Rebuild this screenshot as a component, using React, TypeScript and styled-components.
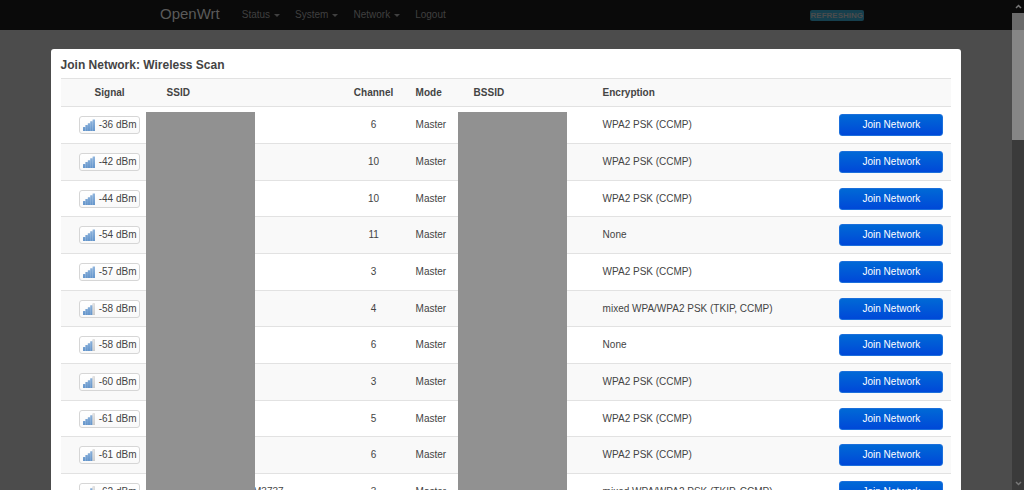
import React from "react";
import styled, { createGlobalStyle } from "styled-components";

const Global = createGlobalStyle`
  * { box-sizing: border-box; }
  body { margin: 0; background: #4c4c4c; font: 10px/14px "Liberation Sans", Arial, sans-serif; color: #444; }
  button { font: inherit; cursor: pointer; }
`;

const Page = styled.div`
  display: grid;
  grid-template-columns: minmax(0, 1fr) 12px;
  grid-template-rows: 100vh;
  height: 100vh;
  overflow: hidden;
`;
const Content = styled.div`
  min-width: 0;
`;
const NavBar = styled.header`
  display: flex;
  align-items: center;
  height: 30px;
  padding: 0 148px 0 160px;
  background: #0a0a0a;
  color: #404040;
`;
const Brand = styled.a`
  margin-right: 22px;
  padding-bottom: 3px;
  font-size: 15px;
  line-height: 18px;
  color: #5a5a5a;
  text-decoration: none;
`;
const Menu = styled.nav`
  display: flex;
  gap: 15px;
  flex: 1;
`;
const MenuLink = styled.a`
  display: flex;
  align-items: center;
  gap: 4px;
  color: inherit;
  text-decoration: none;
`;
const Caret = styled.span`
  border: 3px solid transparent;
  border-top-color: currentColor;
  border-bottom: 0;
`;
const Status = styled.span`
  padding: 0 1px;
  border-radius: 2px;
  background: #163f4d;
  color: #4c4c4c;
  font-size: 8px;
  line-height: 11px;
  font-weight: bold;
`;
const Modal = styled.main`
  position: relative;
  width: 90%;
  margin: 19px auto 0;
  padding: 9px 10px;
  border-radius: 3px;
  background: #fff;
`;
const Title = styled.h4`
  margin: 0 0 5px;
  font-size: 12px;
  line-height: 15px;
`;
const Networks = styled.table`
  width: 100%;
  table-layout: fixed;
  border-collapse: separate;
  border-spacing: 0;
`;
const Col = styled.col<{ $w?: number }>`
  width: ${(p) => (p.$w ? p.$w + "px" : "auto")};
`;
const Row = styled.tr`
  height: 37px;
  &:nth-child(3n) { height: 36px; }
  &:nth-child(even) { background: #f9f9f9; }
`;
const HeadRow = styled.tr`
  height: 28px;
  background: #f9f9f9;
`;
const Head = styled.th<{ $center?: boolean }>`
  padding: 0 8px;
  border-top: 1px solid #e2e2e2;
  text-align: ${(p) => (p.$center ? "center" : "left")};
`;
const Cell = styled.td<{ $align?: string }>`
  padding: 0 8px;
  border-top: 1px solid #e2e2e2;
  text-align: ${(p) => p.$align || "left"};
  white-space: nowrap;
`;
const SsidCell = styled(Cell)`
  padding-right: 56px;
  text-align: right;
`;
const Badge = styled.span`
  display: inline-flex;
  align-items: center;
  gap: 4px;
  height: 18px;
  padding: 0 3px;
  border: 1px solid #d6d6d6;
  border-radius: 3px;
  background: linear-gradient(#fff, #f9f9f9);
  vertical-align: middle;
`;
const Join = styled.button`
  display: block;
  width: 100%;
  height: 22px;
  padding: 0;
  border: 1px solid #1b6fdc;
  border-radius: 3px;
  background: linear-gradient(#0069d6, #0048d8);
  color: #fff;
`;
const Cover = styled.div<{ $left: number }>`
  position: absolute;
  top: 63px;
  bottom: 0;
  left: ${(p) => p.$left}px;
  width: 109px;
  background: #919191;
`;
const ScrollBar = styled.div`
  display: flex;
  flex-direction: column;
  background: linear-gradient(#0a0a0a 30px, #3a3a3a 30px);
`;
const ScrollButton = styled.button`
  display: grid;
  place-items: center;
  height: 13px;
  padding: 0;
  border: 0;
  background: transparent;
  color: #777;
`;
const Thumb = styled.div`
  height: 127px;
  margin-bottom: auto;
  background: linear-gradient(#6b6b6b 17px, #868686 17px);
`;

function Signal({ bars }: { bars: number }) {
  return (
    <svg width="12" height="12" viewBox="0 0 12 12" aria-hidden="true">
      <defs>
        <linearGradient id="bar" x1="0" y1="0" x2="0" y2="12" gradientUnits="userSpaceOnUse">
          <stop offset="0" stopColor="#93b7de" />
          <stop offset="1" stopColor="#6495cb" />
        </linearGradient>
        <linearGradient id="empty" x1="0" y1="0" x2="0" y2="12" gradientUnits="userSpaceOnUse">
          <stop offset="0" stopColor="#ececec" />
          <stop offset="1" stopColor="#d2d2d2" />
        </linearGradient>
      </defs>
      {[0, 1, 2, 3, 4].map((i) => (
        <rect
          key={i}
          x={i * 2.4}
          y={8 - i * 1.9}
          width="2.5"
          height={4 + i * 1.9}
          rx=".3"
          fill={i < bars ? "url(#bar)" : "url(#empty)"}
        />
      ))}
      {bars < 5 && <path d="M9.800 .6h2v11.200h-2z" fill="none" stroke="#c4c4c4" strokeWidth=".4" />}
    </svg>
  );
}

const mixed = "mixed WPA/WPA2 PSK (TKIP, CCMP)";
const wpa2 = "WPA2 PSK (CCMP)";
const networks = [
  { dbm: -36, bars: 5, channel: 6, enc: wpa2 },
  { dbm: -42, bars: 5, channel: 10, enc: wpa2 },
  { dbm: -44, bars: 5, channel: 10, enc: wpa2 },
  { dbm: -54, bars: 5, channel: 11, enc: "None" },
  { dbm: -57, bars: 5, channel: 3, enc: wpa2 },
  { dbm: -58, bars: 4, channel: 4, enc: mixed },
  { dbm: -58, bars: 4, channel: 6, enc: "None" },
  { dbm: -60, bars: 4, channel: 3, enc: wpa2 },
  { dbm: -61, bars: 4, channel: 5, enc: wpa2 },
  { dbm: -61, bars: 4, channel: 6, enc: wpa2 },
  { dbm: -62, bars: 4, channel: 3, enc: mixed, ssid: "M3737" },
];

export default function App() {
  return (
    <Page>
      <Global />
      <Content>
        <NavBar>
          <Brand href="#">OpenWrt</Brand>
          <Menu>
            {["Status", "System", "Network"].map((m) => (
              <MenuLink href="#" key={m}>{m}<Caret /></MenuLink>
            ))}
            <MenuLink href="#">Logout</MenuLink>
          </Menu>
          <Status>REFRESHING</Status>
        </NavBar>
        <Modal>
          <Title>Join Network: Wireless Scan</Title>
          <Networks>
            <colgroup>
              <Col $w={98} /><Col $w={181} /><Col $w={68} /><Col $w={58} /><Col $w={129} /><Col /><Col $w={120} />
            </colgroup>
            <thead>
              <HeadRow>
                <Head $center>Signal</Head>
                <Head>SSID</Head>
                <Head $center>Channel</Head>
                <Head>Mode</Head>
                <Head>BSSID</Head>
                <Head>Encryption</Head>
                <Head />
              </HeadRow>
            </thead>
            <tbody>
              {networks.map((n, i) => (
                <Row key={i}>
                  <Cell $align="center"><Badge><Signal bars={n.bars} />{n.dbm} dBm</Badge></Cell>
                  <SsidCell>{n.ssid}</SsidCell>
                  <Cell $align="center">{n.channel}</Cell>
                  <Cell>Master</Cell>
                  <Cell />
                  <Cell>{n.enc}</Cell>
                  <Cell><Join type="button">Join Network</Join></Cell>
                </Row>
              ))}
            </tbody>
          </Networks>
          <Cover $left={95} />
          <Cover $left={407} />
        </Modal>
      </Content>
      <ScrollBar>
        <ScrollButton aria-label="Scroll up">
          <svg width="7" height="5" viewBox="0 0 7 5" fill="none" stroke="currentColor" strokeWidth="1.5"><path d="M1 4l2.500-2.500L6 4" /></svg>
        </ScrollButton>
        <Thumb />
        <ScrollButton aria-label="Scroll down">
          <svg width="7" height="5" viewBox="0 0 7 5" fill="none" stroke="currentColor" strokeWidth="1.500"><path d="M1 1l2.500 2.500L6 1" /></svg>
        </ScrollButton>
      </ScrollBar>
    </Page>
  );
}
